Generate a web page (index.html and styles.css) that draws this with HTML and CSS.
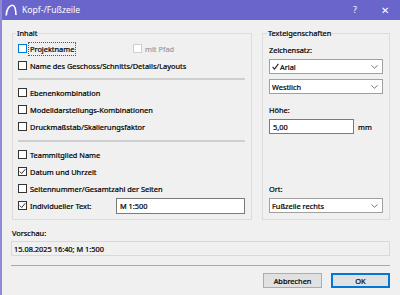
FILE: index.html
```html
<!DOCTYPE html>
<html lang="de">
<head>
  <meta charset="UTF-8" />
  <title>Kopf-/Fußzeile</title>
  <link rel="stylesheet" href="styles.css">
</head>
<body>
  <div class="window">
    <div class="titlebar">
      <svg class="app-icon" width="12" height="12" viewBox="0 0 12 12">
        <path d="M1.2 11.5 C1.6 4 5 1.2 7.5 1.2 C9.6 1.2 10.8 5 11 11" fill="none" stroke="#fff" stroke-width="1.6"/>
      </svg>
      <span class="title">Kopf-/Fußzeile</span>
      <span class="tb-btn help">?</span>
      <span class="tb-btn close">✕</span>
    </div>

    <div class="content">
      <div class="groups">
        <fieldset class="group group-left">
          <legend>Inhalt</legend>
          <div class="rows">
            <div class="row">
              <label class="check col-first"><span class="box focus"></span><span class="focus-text">Projektname</span></label>
              <label class="check disabled"><span class="box"></span>mit Pfad</label>
            </div>
            <div class="row">
              <label class="check"><span class="box"></span>Name des Geschoss/Schnitts/Details/Layouts</label>
            </div>
            <div class="sep"></div>
            <div class="row">
              <label class="check"><span class="box"></span>Ebenenkombination</label>
            </div>
            <div class="row">
              <label class="check"><span class="box"></span>Modelldarstellungs-Kombinationen</label>
            </div>
            <div class="row">
              <label class="check"><span class="box"></span>Druckmaßstab/Skalierungsfaktor</label>
            </div>
            <div class="sep sep-b"></div>
            <div class="row">
              <label class="check"><span class="box"></span>Teammitglied Name</label>
            </div>
            <div class="row">
              <label class="check"><span class="box checked"><svg width="7" height="7" viewBox="0 0 7 7"><path d="M0.8 3.6 L2.7 5.5 L6.3 1.2" fill="none" stroke="#333" stroke-width="1"/></svg></span>Datum und Uhrzeit</label>
            </div>
            <div class="row">
              <label class="check"><span class="box"></span>Seitennummer/Gesamtzahl der Seiten</label>
            </div>
            <div class="row">
              <label class="check col-text"><span class="box checked"><svg width="7" height="7" viewBox="0 0 7 7"><path d="M0.8 3.6 L2.7 5.5 L6.3 1.2" fill="none" stroke="#333" stroke-width="1"/></svg></span>Individueller Text:</label>
              <div class="field text-field">M 1:500</div>
            </div>
          </div>
        </fieldset>

        <fieldset class="group group-right">
          <legend>Texteigenschaften</legend>
          <div class="label first-label">Zeichensatz:</div>
          <div class="select">
            <span><svg class="tick" width="7" height="7" viewBox="0 0 7 7"><path d="M0.6 3.8 L2.5 6 L6.4 0.8" fill="none" stroke="#222" stroke-width="1.1"/></svg>Arial</span>
            <svg class="chev" width="7" height="4" viewBox="0 0 7 4"><path d="M0.5 0.5 L3.5 3.2 L6.5 0.5" fill="none" stroke="#666" stroke-width="0.9"/></svg>
          </div>
          <div class="select select-gap">
            <span>Westlich</span>
            <svg class="chev" width="7" height="4" viewBox="0 0 7 4"><path d="M0.5 0.5 L3.5 3.2 L6.5 0.5" fill="none" stroke="#666" stroke-width="0.9"/></svg>
          </div>
          <div class="label height-label">Höhe:</div>
          <div class="height-row">
            <div class="field height-field">5,00</div>
            <span class="unit">mm</span>
          </div>
          <div class="label place-label">Ort:</div>
          <div class="select">
            <span>Fußzeile rechts</span>
            <svg class="chev" width="7" height="4" viewBox="0 0 7 4"><path d="M0.5 0.5 L3.5 3.2 L6.5 0.5" fill="none" stroke="#666" stroke-width="0.9"/></svg>
          </div>
        </fieldset>
      </div>

      <div class="label preview-label">Vorschau:</div>
      <div class="preview">15.08.2025 16:40; M 1:500</div>

      <div class="footer-line"></div>

      <div class="buttons">
        <div class="btn">Abbrechen</div>
        <div class="btn default">OK</div>
      </div>
    </div>
  </div>
</body>
</html>
```

FILE: styles.css
```css
* { box-sizing: border-box; }

html, body {
  margin: 0;
  padding: 0;
  background: #f0f0f0;
}

body {
  font-family: "Noto Sans", "Open Sans", sans-serif;
  font-size: 7.4px;
  line-height: 12px;
  color: #000;
  -webkit-text-stroke: 0.2px #000;
}

.window {
  width: 400px;
  height: 295px;
  background: #f0f0f0;
  border-left: 2px solid #8f8ad8;
  display: flex;
  flex-direction: column;
}

/* title bar */
.titlebar {
  height: 20px;
  flex: none;
  background: #6a65cb;
  color: #fff;
  -webkit-text-stroke: 0;
  display: flex;
  align-items: center;
  padding-left: 3px;
}

.app-icon { flex: none; }

.title {
  margin-left: 5px;
  font-size: 8.6px;
}

.tb-btn {
  width: 30px;
  text-align: center;
  font-size: 9px;
}

.help { margin-left: auto; }
.close { font-size: 10px; }

/* content */
.content {
  flex: 1;
  padding: 8px 10px 0 10px;
  display: flex;
  flex-direction: column;
}

.groups {
  display: flex;
  gap: 10px;
  height: 192px;
}

.group {
  margin: 0;
  min-width: 0;
  border: 1px solid #dcdcdc;
}

.group legend {
  padding: 0 1px;
  margin-left: -2px;
  line-height: 10px;
}

.group-left {
  width: 240px;
  flex: none;
  padding: 0 6px 5px 5px;
}

.group-right {
  flex: 1;
  padding: 0 6px 6px 6px;
  display: flex;
  flex-direction: column;
}

.rows { padding-top: 2px; }

.row {
  height: 17px;
  display: flex;
  align-items: center;
}

.check {
  display: flex;
  align-items: center;
  gap: 3px;
  white-space: nowrap;
}

.col-first { width: 115px; flex: none; }
.col-text { width: 98px; flex: none; }

.box {
  width: 9px;
  height: 9px;
  flex: none;
  border: 1px solid #333;
  background: #fff;
  display: flex;
  align-items: center;
  justify-content: center;
}

.box.focus { border-color: #0078d7; }

.focus-text {
  outline: 1px dotted #555;
  outline-offset: 0;
  padding: 0 1px;
  margin-left: -1px;
}

.check.disabled {
  color: #a0a0a0;
  -webkit-text-stroke: 0.2px #a0a0a0;
}
.check.disabled .box { border-color: #cfcfcf; }

.sep {
  height: 2px;
  background: #cfcfcf;
  margin: 4px 0;
}

.sep-b { margin-top: 5px; }

.field {
  height: 16px;
  background: #fff;
  border: 1px solid #7a7a7a;
  padding-left: 3px;
  display: flex;
  align-items: center;
}

.text-field { flex: 1; }

.label { height: 12px; }

.first-label { margin-top: 6px; }

.select {
  height: 15px;
  margin-top: 3px;
  background: #fff;
  border: 1px solid #a0a0a0;
  padding: 0 4px 0 2px;
  display: flex;
  align-items: center;
  justify-content: space-between;
}

.select-gap { margin-top: 5px; }

.tick { margin-right: 1px; vertical-align: -0.5px; }

.height-label { margin-top: 10px; }

.height-row {
  margin-top: 3px;
  display: flex;
  align-items: center;
}

.height-field {
  width: 85px;
  height: 15px;
}

.unit { margin-left: 4px; }

.place-label { margin-top: auto; }

/* preview + buttons */
.preview-label {
  margin-top: 7px;
  padding-left: 0;
}

.preview {
  height: 15px;
  margin: 2px 0 0 -1px;
  border: 1px solid #d9d9d9;
  padding-left: 2px;
  display: flex;
  align-items: center;
}

.footer-line {
  height: 1px;
  background: #a9a9a9;
  margin: 9px 0 0 -1px;
}

.buttons {
  margin-top: 7px;
  display: flex;
  justify-content: flex-end;
  gap: 9px;
}

.btn {
  width: 59px;
  height: 15px;
  background: #e1e1e1;
  border: 1px solid #adadad;
  display: flex;
  align-items: center;
  justify-content: center;
}

.btn.default {
  border-color: #0078d7;
  box-shadow: inset 0 0 0 1px #0078d7;
}
```
